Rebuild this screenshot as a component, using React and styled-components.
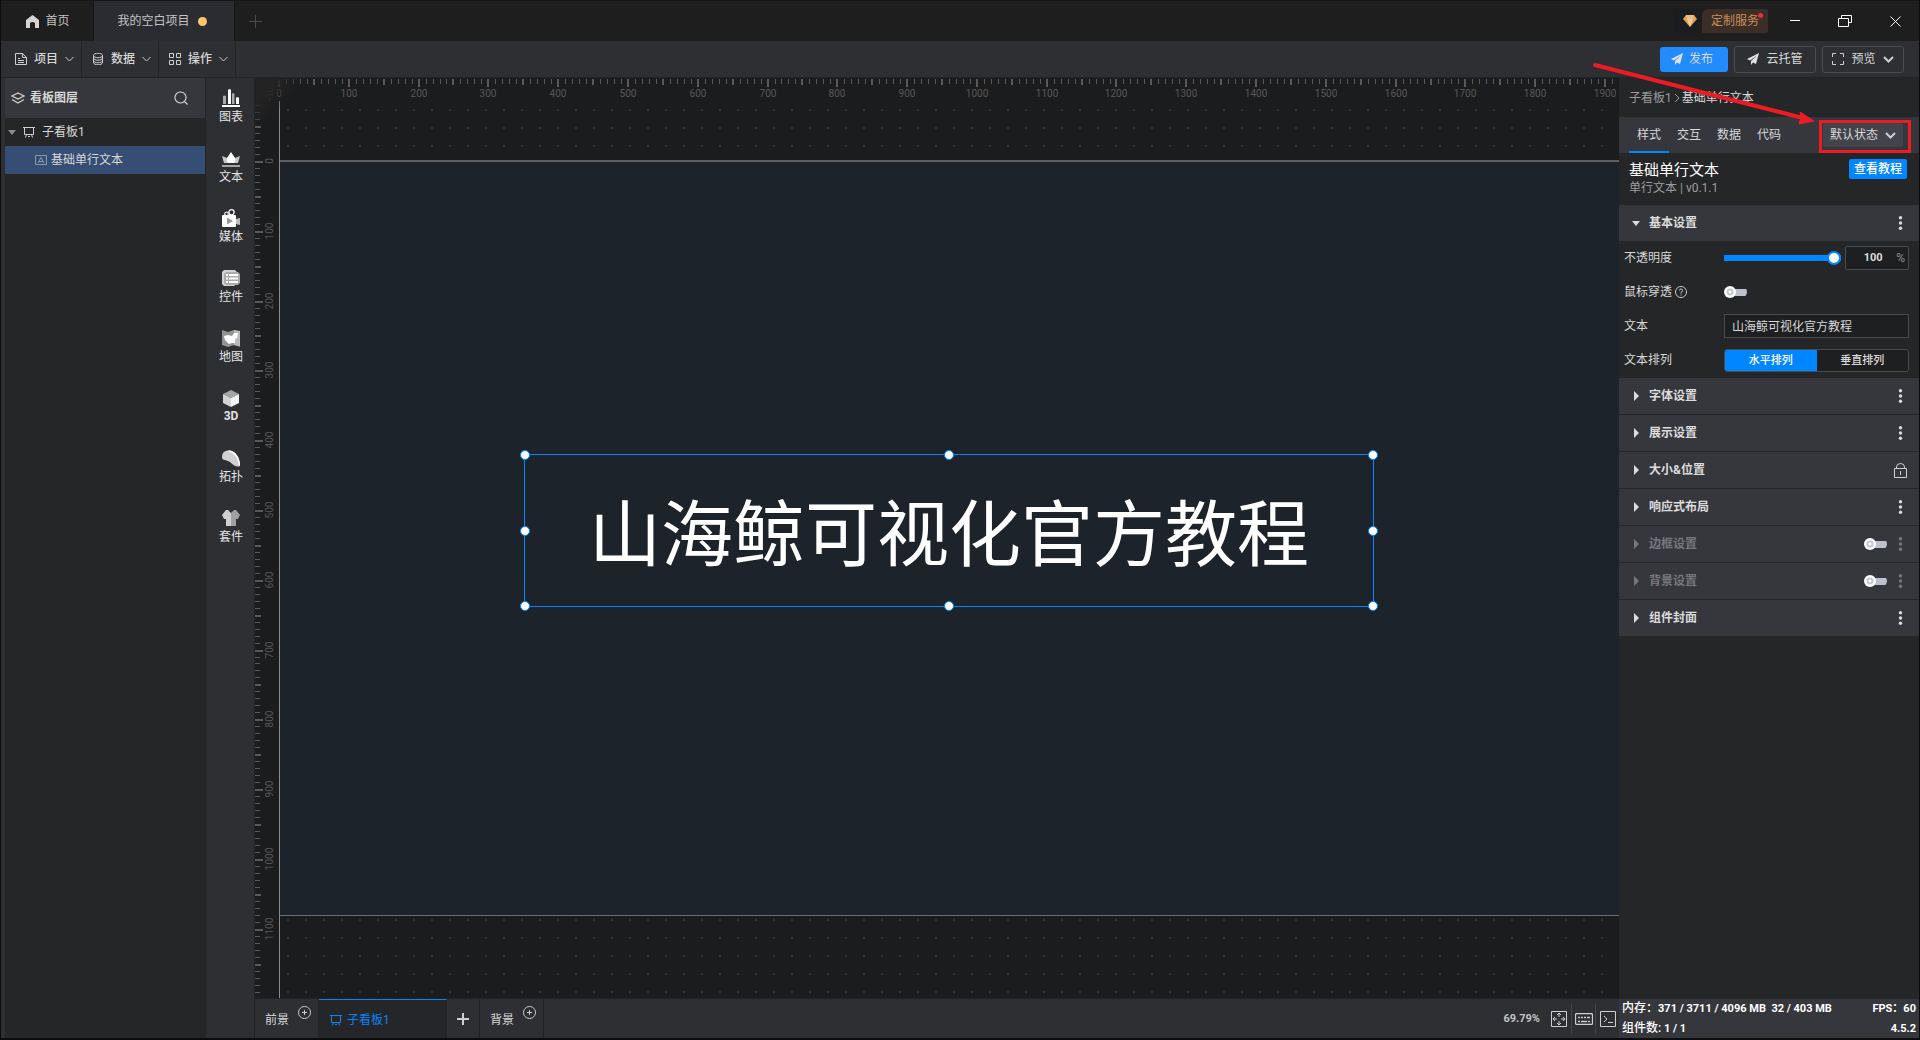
import React, { useState } from 'react';
import styled, { createGlobalStyle } from 'styled-components';

const GlobalStyle = createGlobalStyle`
  * { box-sizing: border-box; }
  body {
    margin: 0;
    background: #0c0c0d;
    color: #d8d8d8;
    font-family: Roboto, "Noto Sans CJK SC", sans-serif;
    font-size: 12px;
    line-height: 18px;
  }
  button, input, select {
    margin: 0;
    padding: 0;
    border: 0;
    background: none;
    color: inherit;
    font: inherit;
  }
  button, select { cursor: pointer; }
  a { color: inherit; text-decoration: none; }
  svg { display: block; flex: none; }
`;

const SCALE = 0.6979;

const Shell = styled.div`
  display: flex;
  flex-direction: column;
  min-height: 100vh;
  padding: 0 1px 2px;
`;

/* ---------- title bar ---------- */

const TitleBar = styled.header`
  display: flex;
  align-items: stretch;
  height: 41px;
  border-top: 1px solid #151515;
  background: #1e1e1e;
`;
const WindowTab = styled.button`
  display: flex;
  align-items: center;
  justify-content: center;
  gap: ${props => props.$active ? '8px' : '6px'};
  width: ${props => props.$active ? '141px' : '93px'};
  padding: ${props => props.$active ? '0 4px 0 0' : '0 0 0 2px'};
  border-right: 1px solid #141415;
  background: ${props => props.$active ? '#2b2c31' : 'transparent'};
  color: #c4c4c4;
`;
const UnsavedDot = styled.span`
  width: 9px;
  height: 9px;
  border-radius: 50%;
  background: #ffc766;
`;
const NewTab = styled.button`
  display: flex;
  align-items: center;
  padding: 0 14px;
`;
const Spacer = styled.div`
  flex: 1;
`;
const ServiceLink = styled.a`
  display: flex;
  align-items: center;
  align-self: center;
  gap: 5px;
  height: 24px;
  padding-left: 10px;
  background: #1b1c20;
`;
const ServiceBadge = styled.span`
  position: relative;
  height: 24px;
  padding: 0 9px;
  border-radius: 6px 2px 2px 0;
  background: #3c2e27;
  color: #c98e5c;
  line-height: 24px;
`;
const NoticeDot = styled.i`
  position: absolute;
  top: 4px;
  right: 5px;
  width: 5px;
  height: 5px;
  border-radius: 50%;
  background: #e0343c;
`;
const WindowButtons = styled.div`
  display: flex;
  align-items: center;
  gap: 34px;
  padding: 0 16px 0 19px;
`;
const WindowButton = styled.button`
  display: flex;
  justify-content: center;
  width: 16px;
`;

/* ---------- menu bar ---------- */

const MenuBar = styled.nav`
  display: flex;
  align-items: center;
  height: 37px;
  padding-left: 4px;
  border-bottom: 1px solid #222325;
  background: #2e2f33;
`;
const MenuButton = styled.button`
  display: flex;
  align-items: center;
  justify-content: center;
  gap: 7px;
  width: 77px;
  height: 36px;
  padding-left: 3px;
  border-right: 1px solid #222326;
  font-weight: 500;
`;
const Actions = styled.div`
  display: flex;
  align-items: center;
  gap: 6px;
  padding-right: 15px;
`;
const ActionButton = styled.button`
  display: flex;
  align-items: center;
  justify-content: center;
  gap: ${props => props.$primary ? '6px' : '7px'};
  width: ${props => props.$primary ? '68px' : '82px'};
  height: ${props => props.$primary ? '25px' : '27px'};
  padding-right: ${props => props.$primary ? '4px' : '0'};
  border: ${props => props.$primary ? '0' : '1px solid #4b4c50'};
  border-radius: 3px;
  background: ${props => props.$primary ? '#228bff' : 'transparent'};
`;

/* ---------- left side ---------- */

const Body = styled.div`
  display: flex;
  flex: 1;
  padding-left: 4px;
  background: #2e2f33;
`;
const LayerPanel = styled.aside`
  flex: none;
  width: 200px;
  background: #252627;
`;
const PanelHeader = styled.div`
  display: flex;
  align-items: center;
  gap: 5px;
  height: 40px;
  padding: 0 17px 0 6px;
  background: #36373c;
`;
const PanelTitle = styled.h2`
  flex: 1;
  margin: 0;
  font-size: 12px;
  font-weight: 700;
`;
const LayerRow = styled.button`
  display: flex;
  align-items: center;
  gap: ${props => props.$selected ? '4px' : '7px'};
  width: 100%;
  height: 28px;
  padding-left: ${props => props.$selected ? '30px' : '3px'};
  background: ${props => props.$selected ? '#364e73' : 'transparent'};
`;
const Rail = styled.nav`
  display: flex;
  flex: none;
  flex-direction: column;
  width: 50px;
  padding-left: 2px;
  border-right: 1px solid #222326;
  border-left: 1px solid #222326;
  background: #2e2f33;
`;
const RailButton = styled.button`
  display: flex;
  flex-direction: column;
  align-items: center;
  gap: ${props => props.$latin ? '0' : '1px'};
  height: 60px;
  padding-top: 11px;
  color: #e4e4e4;
  font-weight: ${props => props.$latin ? 700 : 400};
`;

/* ---------- work area ---------- */

const Center = styled.main`
  display: flex;
  flex: 1;
  flex-direction: column;
  min-width: 0;
`;
const WorkArea = styled.div`
  position: relative;
  display: grid;
  flex: 1;
  grid-template-rows: 23px 1fr;
  grid-template-columns: 24px 1fr;
  overflow: hidden;
  background: #1b1c1d;
`;
const RulerSide = styled.div`
  grid-row: 1 / 3;
  grid-column: 1;
  min-height: 0;
  overflow: hidden;
  contain: size;
`;
const RulerTop = styled.div`
  grid-row: 1;
  grid-column: 2;
  min-width: 0;
`;
const RulerSvg = styled.svg`
  overflow: visible;
  fill: #5a5859;
  font-size: 10px;
`;
const CornerShade = styled.div`
  position: absolute;
  top: 0;
  left: 0;
  width: 44px;
  height: 44px;
  background: linear-gradient(135deg, #232324 25%, transparent 65%);
`;
const Stage = styled.div`
  grid-row: 2;
  grid-column: 2;
  min-width: 0;
  padding-top: 59px;
  border-left: 1px solid #8a8a8a;
  background: conic-gradient(from 0deg at 2px 2px, transparent 270deg, #343538 270deg) 7px 8px / 18px 18px;
`;
const Artboard = styled.div`
  position: relative;
  box-sizing: content-box;
  aspect-ratio: 16 / 9;
  border-top: 2px solid #5e6062;
  border-bottom: 1px solid #6c6d6e;
  background: #1c232a;
`;
const Selection = styled.div`
  position: absolute;
  top: 292px;
  left: 244px;
  display: flex;
  align-items: center;
  justify-content: center;
  width: 850px;
  height: 153px;
  padding-bottom: 4px;
  border: 1px solid #0086ff;
  color: #fff;
  font-family: "Noto Sans CJK SC", sans-serif;
  font-size: 72px;
  line-height: 108px;
  white-space: nowrap;
`;
const Handle = styled.i`
  position: absolute;
  left: ${props => props.$x};
  top: ${props => props.$y};
  width: 10px;
  height: 10px;
  margin: -5px;
  border: 1px solid #0086ff;
  border-radius: 50%;
  background: #fff;
`;

const BottomBar = styled.footer`
  display: flex;
  flex: none;
  height: 40px;
  border-top: 1px solid #222325;
  background: #2e2f33;
`;
const BoardTab = styled.button`
  display: flex;
  align-items: center;
  gap: ${props => props.$active ? '5px' : '4px'};
  width: ${props => props.$active ? '128px' : '64px'};
  padding: 2px 0 0 ${props => props.$active ? '11px' : '10px'};
  border-right: 1px solid #222325;
  ${props => props.$active && `
    border-top: 1px solid #0a84f5;
    background: #252629;
    color: #0a84f5;
  `}
`;
const RaisedIcon = styled.span`
  align-self: flex-start;
  padding: 5px 0 0 5px;
`;
const AddBoard = styled.button`
  display: flex;
  align-items: center;
  justify-content: center;
  width: 33px;
  border-right: 1px solid #222325;
`;
const ZoomText = styled.span`
  align-self: center;
  padding-right: 7px;
  color: #c4c4c4;
  font-size: 11px;
  font-weight: 700;
`;
const ViewButton = styled.button`
  display: flex;
  align-items: center;
  justify-content: center;
  align-self: center;
  width: 24px;
  height: 30px;
  border-left: ${props => props.$first ? '0' : '1px solid #45464b'};
`;

/* ---------- inspector ---------- */

const Inspector = styled.aside`
  position: relative;
  display: flex;
  flex: none;
  flex-direction: column;
  width: 300px;
  background: #252627;
`;
const Breadcrumb = styled.div`
  display: flex;
  align-items: center;
  gap: 2px;
  height: 39px;
  padding-left: 10px;
  color: #9d9d9d;
`;
const Current = styled.span`
  color: #d8d8d8;
`;
const Tabs = styled.div`
  display: flex;
  align-items: center;
  height: 36px;
  padding: 0 8px 0 10px;
  background: #36373c;
`;
const TabButton = styled.button`
  width: 40px;
  height: 36px;
  border-top: 2px solid transparent;
  border-bottom: 2px solid ${props => props.$active ? '#0086ff' : 'transparent'};
`;
const StateField = styled.label`
  position: relative;
  display: flex;
  align-items: center;
  align-self: flex-end;
  padding: 0 5px 3px 1px;
  border: 3px solid #ed1c24;
`;
const StateSelect = styled.select`
  width: 80px;
  height: 24px;
  padding-left: 7px;
  border-radius: 2px;
  background: #43444b;
  appearance: none;
`;
const SelectChevron = styled.span`
  position: absolute;
  right: 12px;
  pointer-events: none;
`;
const Heading = styled.div`
  display: flex;
  align-items: flex-start;
  justify-content: space-between;
  height: 52px;
  padding: 6px 12px 0 10px;
`;
const ComponentName = styled.h1`
  margin: 0;
  color: #fff;
  font-size: 15px;
  font-weight: 400;
  line-height: 22px;
`;
const Version = styled.p`
  margin: 0;
  color: #9d9d9d;
  line-height: 15px;
`;
const GuideLink = styled.a`
  padding: 0 5px;
  border-radius: 2px;
  background: #0086ff;
  color: #fff;
  font-weight: 500;
  line-height: 20px;
`;
const SectionHeader = styled.div`
  display: flex;
  align-items: center;
  height: ${props => props.$open ? '36px' : '37px'};
  padding: 0 12px 0 13px;
  border-bottom: ${props => props.$open ? '0' : '1px solid #252627'};
  background: #36373c;
  color: ${props => props.$dim ? '#77787c' : '#dcdcdc'};
`;
const SectionToggle = styled.button`
  display: flex;
  flex: 1;
  align-items: center;
  gap: 9px;
  font-weight: 700;
`;
const SectionTools = styled.span`
  display: flex;
  align-items: center;
  gap: 7px;
`;
const Fields = styled.div`
  padding-bottom: 1px;
`;
const Field = styled.div`
  display: flex;
  align-items: center;
  height: 34px;
  padding: 0 10px 0 5px;
`;
const FieldLabel = styled.label`
  display: flex;
  align-items: center;
  gap: 3px;
  width: 100px;
`;
const Slider = styled.input`
  flex: 1;
  min-width: 0;
  height: 14px;
  margin-right: 4px;
  background: linear-gradient(#0086ff, #0086ff) center / 100% 6px no-repeat;
  border-radius: 3px;
  appearance: none;
  &::-webkit-slider-thumb {
    width: 14px;
    height: 14px;
    border: 2px solid #0086ff;
    border-radius: 50%;
    background: #fff;
    appearance: none;
  }
`;
const NumberBox = styled.div`
  display: flex;
  align-items: center;
  width: 64px;
  height: 24px;
  padding-right: 3px;
  border: 1px solid #4a4b4f;
  border-radius: 2px;
  background: #1e1f20;
  color: #8f8f8f;
`;
const NumberInput = styled.input`
  flex: 1;
  min-width: 0;
  padding-left: 4px;
  color: #dcdcdc;
  font-size: 11px;
  font-weight: 700;
  text-align: center;
`;
const TextInput = styled.input`
  flex: 1;
  min-width: 0;
  height: 24px;
  padding: 0 0 2px 7px;
  border: 1px solid #4a4b4f;
  background: #1e1f20;
`;
const Switch = styled.input`
  display: flex;
  align-items: center;
  width: 23px;
  height: 12px;
  background: linear-gradient(#bcc1cd, #bcc1cd) right center / 18px 7px no-repeat;
  border-radius: 6px;
  appearance: none;
  &::before {
    width: 12px;
    height: 12px;
    border-radius: 50%;
    background: radial-gradient(circle, #fff 1px, #c3c6ce 2px, #c3c6ce 3px, #fff 4px);
    content: '';
  }
`;
const Segments = styled.div`
  display: flex;
  flex: 1;
  height: 23px;
  overflow: hidden;
  border: 1px solid #4a4b4f;
  border-radius: 3px;
  background: #1e1f20;
`;
const Segment = styled.label`
  flex: 1;
  background: ${props => props.$active ? '#0086ff' : 'transparent'};
  color: ${props => props.$active ? '#fff' : '#d8d8d8'};
  font-size: 11px;
  font-weight: 500;
  line-height: 21px;
  text-align: center;
`;
const HiddenRadio = styled.input`
  position: absolute;
  opacity: 0;
  pointer-events: none;
`;
const Status = styled.div`
  display: flex;
  flex-direction: column;
  justify-content: space-between;
  height: 39px;
  padding: 0 3px;
  background: #36373c;
  color: #fff;
`;
const StatusLine = styled.div`
  display: flex;
  justify-content: space-between;
  font-size: 11px;
  font-weight: 700;
  line-height: 19px;
  white-space: pre;
`;
const StatusKey = styled.span`
  font-size: 12px;
  font-weight: 500;
`;
const Arrow = styled.svg`
  position: absolute;
  top: -16px;
  left: -28px;
  pointer-events: none;
`;

/* ---------- icons ---------- */

function Line({ w, h, d, width = 1, color = '#cfcfcf' }) {
  return (
    <svg width={w} height={h} viewBox={`0 0 ${w} ${h}`} fill="none" stroke={color} strokeWidth={width}>
      <path d={d} />
    </svg>
  );
}

const Chevron = ({ width = 1 }) => <Line w={9} h={6} width={width} d="M.5 1l4 4 4-4" />;

const Board = ({ color }) => (
  <Line w={12} h={12} color={color} d="M0 1.500h12M1.500 1.500v7h9v-7M3.500 8.500l-1 3M8.500 8.500l1 3M5 10.500h2" />
);

const Plane = () => (
  <svg width="12" height="12" viewBox="0 0 12 12" fill="#e0e0e0">
    <path d="M12 0L0 6l3 1.500L10 2.500 4 8v4l2-2.500L9 11z" />
  </svg>
);

const Caret = ({ open, color = 'currentColor' }) => (
  <svg width="8" height="10" viewBox="0 0 8 10" fill={color}>
    <path d={open ? 'M0 3h8L4 8z' : 'M2 0v10l5-5z'} />
  </svg>
);

const Dots = () => (
  <svg width="13" height="14" viewBox="0 0 13 14" fill="currentColor">
    <circle cx="6.500" cy="1.800" r="1.700" />
    <circle cx="6.500" cy="7" r="1.700" />
    <circle cx="6.500" cy="12.200" r="1.700" />
  </svg>
);

const CirclePlus = () => <Line w={13} h={13} d="M6.500 .5a6 6 0 1 0 .01 0zM4 6.500h5M6.500 4v5" />;

const railIcons = {
  chart: (
    <>
      <path d="M0 16h18v2H0z" fill="#fff" />
      <path d="M1 7q1.500-1 3 0v8H1z" fill="#aaa" />
      <path d="M6 1q1.500-2 3 0v14H6z" fill="#fff" />
      <path d="M10 5q1-2 2.500 0v10H10z" fill="#aaa" />
      <path d="M14 9q1.500-2 3 0v6h-3z" fill="#fff" />
    </>
  ),
  text: (
    <>
      <path d="M0 7l5 2 4-4 4 4 5-2-2 7H2z" fill="#c8c8c8" />
      <path d="M9 3l4 6q1 3-1 5H6Q4 12 5 9z" fill="#fff" />
      <path d="M0 16h18v2H0z" fill="#a4a4a4" />
    </>
  ),
  media: (
    <>
      <circle cx="4.500" cy="5" r="1.800" fill="none" stroke="#ddd" strokeWidth="1.300" />
      <circle cx="9.500" cy="3.300" r="2.600" fill="none" stroke="#fff" strokeWidth="1.300" />
      <path d="M14 10l4-1v7l-4-1z" fill="#bbb" />
      <rect y="6" width="14" height="12" rx="1" fill="#fff" />
      <path d="M5 8.500l6 3.500-6 3.500z" fill="#999" />
    </>
  ),
  control: (
    <>
      <path d="M2 1h11l2 2v12l-3 2H2l-2-2V3z" fill="#d2d2d2" />
      <path d="M4 3h12l2 2v9l-2 2H4l-2-2V5z" fill="#aaa" />
      <path d="M4 5h2v2H4zM7 5h9v2H7zM4 8.500h2v2H4zM7 8.500h9v2H7zM4 12h2v2H4zM7 12h9v2H7z" fill="#fff" />
    </>
  ),
  map: (
    <>
      <path d="M0 1l6 2 6-2 6 2v15l-6-2-6 2-6-2z" fill="#939393" />
      <path d="M12 1l6 1v15l-6-1z" fill="#bbb" />
      <path d="M2 7l4-1 4 1 2-3h4l-1 5-2 1v4l-3 0-3 1-4-4z" fill="#fff" />
    </>
  ),
  cube: (
    <>
      <path d="M9 1l8 4-8 4-8-4z" fill="#a5a5a5" />
      <path d="M1 5l8 4v9l-8-4z" fill="#d4d4d4" />
      <path d="M17 5L9 9v9l8-4z" fill="#f2f2f2" />
    </>
  ),
  topo: (
    <>
      <path d="M0 8Q0 3 4 2q6-2 10 3 4 5 4 12-4 2-10-4-2-1-5-2-3 0-3-3z" fill="#d0d0d0" />
      <path d="M4 2q6-2 10 3 4 5 4 11l-1 1q0-6-4.500-11Q9 2 4 2z" fill="#fff" />
    </>
  ),
  kit: (
    <>
      <path d="M4 1l2 0 3 3v13H4v-7L2 10 0 6z" fill="#cfcfcf" />
      <path d="M14 1h-2L9 4v13h5v-7l2 0 2-4z" fill="#a0a0a0" />
    </>
  ),
};

const railItems = [
  ['chart', '图表'],
  ['text', '文本'],
  ['media', '媒体'],
  ['control', '控件'],
  ['map', '地图'],
  ['cube', '3D'],
  ['topo', '拓扑'],
  ['kit', '套件'],
];

const menus = [
  { name: '项目', icon: 'M.5.5h7l4 4v7H.5zM7.500.5v4h4M3 5.500h2M3 7.500h6M3 9.500h6' },
  { name: '数据', icon: 'M1.500 2.500c0-3 9-3 9 0s-9 3-9 0v7c0 3 9 3 9 0v-7M1.500 5c0 3 9 3 9 0M1.500 7.500c0 3 9 3 9 0' },
  { name: '操作', icon: 'M.5.5h4v4h-4zM7.500.5h4v4h-4zM.5 7.500h4v4h-4zM7.500 7.500h4v4h-4z' },
];

const sections = [
  { name: '字体设置' },
  { name: '展示设置' },
  { name: '大小&位置', locked: true },
  { name: '响应式布局' },
  { name: '边框设置', off: true },
  { name: '背景设置', off: true },
  { name: '组件封面' },
];

const handles = [
  ['0%', '0%'], ['50%', '0%'], ['100%', '0%'],
  ['0%', '50%'], ['100%', '50%'],
  ['0%', '100%'], ['50%', '100%'], ['100%', '100%'],
];

function Ruler({ vertical }) {
  const ticks = [];
  const first = vertical ? -11 : 0;
  const last = vertical ? 119 : 191;
  const origin = vertical ? 83 : 0;

  for (let i = first; i <= last; i++) {
    const at = Math.round(origin + i * 10 * SCALE);
    const major = i % 10 === 0;
    const middle = i % 5 === 0;
    const length = major ? 8 : middle ? 6 : 5;
    const thick = middle ? 2 : 1;
    ticks.push(vertical
      ? <rect key={i} x="0" y={at} width={length} height={thick} />
      : <rect key={i} x={at - (middle ? 1 : 0)} y="1" width={thick} height={length} />);
    if (major) {
      ticks.push(
        <text
          key={'t' + i}
          textAnchor="middle"
          transform={vertical ? `translate(18 ${at}) rotate(-90)` : `translate(${at} 19)`}
        >
          {i * 10}
        </text>
      );
    }
  }
  return (
    <RulerSvg width={vertical ? 24 : '100%'} height={vertical ? '100%' : 23}>
      {ticks}
    </RulerSvg>
  );
}

function SettingsSection({ name, locked, off }) {
  return (
    <SectionHeader $dim={off}>
      <SectionToggle><Caret />{name}</SectionToggle>
      <SectionTools>
        {off && <Switch type="checkbox" aria-label={name} />}
        {locked
          ? <Line w={13} h={15} d="M.5 5.500h12v9H.5zM2.500 5.500V4q0-3.500 4-3.500t4 3.500v1.500M6.500 8v4" />
          : <Dots />}
      </SectionTools>
    </SectionHeader>
  );
}

export default function App() {

  const [opacity, setOpacity] = useState(100);
  const [text, setText] = useState('山海鲸可视化官方教程');
  const [direction, setDirection] = useState('水平排列');

  return (
    <Shell>
      <GlobalStyle />
      <TitleBar>
        <WindowTab>
          <svg width="13" height="13" viewBox="0 0 13 13" fill="#d4d4d4">
            <path d="M6.500 0L13 5v8H9V8q-2.500-2-5 0v5H0V5z" />
          </svg>
          首页
        </WindowTab>
        <WindowTab $active>我的空白项目<UnsavedDot /></WindowTab>
        <NewTab aria-label="新建"><Line w={13} h={13} color="#4c4c4c" d="M0 6.500h13M6.500 0v13" /></NewTab>
        <Spacer />
        <ServiceLink href="#service">
          <svg width="14" height="12" viewBox="0 0 14 12">
            <path d="M3 0h8l3 4-7 8-7-8z" fill="#e0a15f" />
            <path d="M4 4h6l-3 8z" fill="#f6cd92" />
            <path d="M3 0h8L10 4H4z" fill="#f0bd80" />
          </svg>
          <ServiceBadge>定制服务<NoticeDot /></ServiceBadge>
        </ServiceLink>
        <WindowButtons>
          <WindowButton aria-label="最小化"><Line w={10} h={2} color="#fff" d="M0 .5h10" /></WindowButton>
          <WindowButton aria-label="还原"><Line w={14} h={12} color="#fff" d="M.5 3.500h10v8H.5zM3.500 3.500v-3h10v7h-3" /></WindowButton>
          <WindowButton aria-label="关闭"><Line w={11} h={11} color="#fff" d="M.5.5l10 10M10.500.5l-10 10" /></WindowButton>
        </WindowButtons>
      </TitleBar>

      <MenuBar>
        {menus.map(menu => (
          <MenuButton key={menu.name}>
            <Line w={12} h={12} d={menu.icon} />
            {menu.name}
            <Chevron />
          </MenuButton>
        ))}
        <Spacer />
        <Actions>
          <ActionButton $primary><Plane />发布</ActionButton>
          <ActionButton><Plane />云托管</ActionButton>
          <ActionButton>
            <Line w={12} h={12} d="M4 .5H.5V4M8 .5h3.500V4M.5 8v3.500H4M11.500 8v3.500H8" />
            预览
            <Line w={11} h={7} width={2} d="M1 1l4.500 4.500L10 1" />
          </ActionButton>
        </Actions>
      </MenuBar>

      <Body>
        <LayerPanel>
          <PanelHeader>
            <Line w={14} h={12} width={1.3} d="M7 1l6 3-6 3-6-3zM1 7.500l6 3.500 6-3.500" />
            <PanelTitle>看板图层</PanelTitle>
            <button aria-label="搜索"><Line w={14} h={14} width={1.2} d="M6.500 1a5.500 5.500 0 1 0 .01 0zM10.500 10.500l3 3" /></button>
          </PanelHeader>
          <LayerRow>
            <Caret open color="#8a8a8a" />
            <Board />
            子看板1
          </LayerRow>
          <LayerRow $selected>
            <Line w={12} h={10} color="#8c98ab" d="M.5.5h11v9H.5zM3 8l3-5.500L9 8M4 6.500h4" />
            基础单行文本
          </LayerRow>
        </LayerPanel>

        <Rail>
          {railItems.map(([icon, name]) => (
            <RailButton key={icon} $latin={name === '3D'}>
              <svg width="18" height="18" viewBox="0 0 18 18">{railIcons[icon]}</svg>
              {name}
            </RailButton>
          ))}
        </Rail>

        <Center>
          <WorkArea>
            <RulerSide><Ruler vertical /></RulerSide>
            <RulerTop><Ruler /></RulerTop>
            <Stage>
              <Artboard>
                <Selection>
                  {text}
                  {handles.map(([x, y]) => <Handle key={x + y} $x={x} $y={y} />)}
                </Selection>
              </Artboard>
            </Stage>
            <CornerShade />
          </WorkArea>
          <BottomBar>
            <BoardTab>前景<RaisedIcon><CirclePlus /></RaisedIcon></BoardTab>
            <BoardTab $active><Board color="#0a84f5" />子看板1</BoardTab>
            <AddBoard aria-label="添加"><Line w={12} h={12} width={2} d="M0 6h12M6 0v12" /></AddBoard>
            <BoardTab>背景<RaisedIcon><CirclePlus /></RaisedIcon></BoardTab>
            <Spacer />
            <ZoomText>69.79%</ZoomText>
            <ViewButton $first aria-label="适应画布">
              <Line w={16} h={16} d="M.5.5h15v15H.5zM8 2v4M8 10v4M2 8h4M10 8h4M6 4l2-2 2 2M6 12l2 2 2-2M4 6L2 8l2 2M12 6l2 2-2 2" />
            </ViewButton>
            <ViewButton aria-label="快捷键">
              <Line w={18} h={12} width={1.3} d="M2 .5h14q1.500 0 1.500 1.500v8q0 1.500-1.500 1.500H2Q.5 11.500.5 10V2Q.5.5 2 .5zM3 4.500h2M6 4.500h2M9 4.500h2M12 4.500h3M3 8.500h2M6 8.500h6M13 8.500h2" />
            </ViewButton>
            <ViewButton aria-label="控制台">
              <Line w={16} h={16} d="M.5.5h15v15H.5zM4 5l3 3-3 3M8 11.500h5" />
            </ViewButton>
          </BottomBar>
        </Center>

        <Inspector>
          <Breadcrumb>
            子看板1
            <Line w={6} h={8} color="#9d9d9d" d="M1 0l4 4-4 4" />
            <Current>基础单行文本</Current>
          </Breadcrumb>
          <Tabs>
            <TabButton $active>样式</TabButton>
            <TabButton>交互</TabButton>
            <TabButton>数据</TabButton>
            <TabButton>代码</TabButton>
            <Spacer />
            <StateField>
              <StateSelect aria-label="状态">
                <option>默认状态</option>
              </StateSelect>
              <SelectChevron><Line w={11} h={7} width={2} d="M1 1l4.500 4.500L10 1" /></SelectChevron>
            </StateField>
          </Tabs>
          <Heading>
            <div>
              <ComponentName>基础单行文本</ComponentName>
              <Version>单行文本 | v0.1.1</Version>
            </div>
            <GuideLink href="#guide">查看教程</GuideLink>
          </Heading>

          <SectionHeader $open>
            <SectionToggle><Caret open />基本设置</SectionToggle>
            <Dots />
          </SectionHeader>
          <Fields>
            <Field>
              <FieldLabel htmlFor="opacity">不透明度</FieldLabel>
              <Slider type="range" id="opacity" value={opacity} onChange={(event) => setOpacity(event.target.value)} />
              <NumberBox>
                <NumberInput aria-label="不透明度数值" value={opacity} onChange={(event) => setOpacity(event.target.value)} />
                %
              </NumberBox>
            </Field>
            <Field>
              <FieldLabel htmlFor="through">
                鼠标穿透
                <Line w={12} h={12} d="M6 .5a5.500 5.500 0 1 0 .01 0zM4.500 4.500q0-1.500 1.500-1.500t1.500 1.500T6 6.500v1M6 8.500v1" />
              </FieldLabel>
              <Switch type="checkbox" id="through" />
            </Field>
            <Field>
              <FieldLabel htmlFor="text">文本</FieldLabel>
              <TextInput id="text" value={text} onChange={(event) => setText(event.target.value)} />
            </Field>
            <Field>
              <FieldLabel as="span">文本排列</FieldLabel>
              <Segments>
                {['水平排列', '垂直排列'].map(name => (
                  <Segment key={name} $active={direction === name}>
                    <HiddenRadio type="radio" name="direction" checked={direction === name} onChange={() => setDirection(name)} />
                    {name}
                  </Segment>
                ))}
              </Segments>
            </Field>
          </Fields>
          {sections.map(section => <SettingsSection key={section.name} {...section} />)}

          <Spacer />
          <Status>
            <StatusLine>
              <span><StatusKey>内存：</StatusKey>371 / 3711 / 4096 MB  32 / 403 MB</span>
              <span>FPS：60</span>
            </StatusLine>
            <StatusLine>
              <span><StatusKey>组件数:</StatusKey> 1 / 1</span>
              <span>4.5.2</span>
            </StatusLine>
          </Status>
          <Arrow width="230" height="70" viewBox="0 0 230 70">
            <path d="M4 3l204 52" stroke="#ed1c24" strokeWidth="4" strokeLinecap="round" />
            <path d="M223 59l-14-9 1 5-2 7z" fill="#ed1c24" stroke="#ed1c24" />
          </Arrow>
        </Inspector>
      </Body>
    </Shell>
  );
}
